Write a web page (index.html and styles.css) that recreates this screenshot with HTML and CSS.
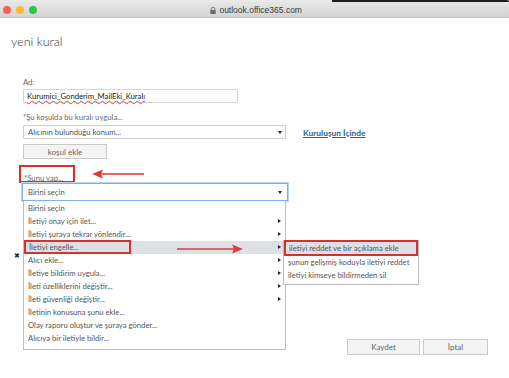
FILE: index.html
```html
<!DOCTYPE html>
<html lang="tr">
<head>
  <meta charset="UTF-8">
  <meta name="viewport" content="width=device-width, initial-scale=1">
  <title>yeni kural</title>
  <link rel="stylesheet" href="styles.css">
</head>
<body>

  <div class="topedge">
    <div class="topedge-left"></div>
    <div class="topedge-right"></div>
  </div>

  <div class="titlebar">
    <div class="lights">
      <span class="light red"></span>
      <span class="light yellow"></span>
      <span class="light green"></span>
    </div>
    <div class="address">
      <svg class="lock" width="6" height="7" viewBox="0 0 6 7">
        <path d="M1.2 3V2a1.8 1.8 0 0 1 3.6 0v1" fill="none" stroke="#6b6b6b" stroke-width="0.9"/>
        <rect x="0.3" y="3" width="5.4" height="4" rx="0.6" fill="#6b6b6b"/>
      </svg>
      outlook.office365.com
    </div>
  </div>

  <div class="page">
    <h1>yeni kural</h1>

    <div class="form">
      <label class="field-label name-label">Ad:</label>
      <div class="textbox"><span class="misspelled">Kurumici_Gonderim_MailEki_Kuralı</span></div>

      <label class="field-label cond-label">*Şu koşulda bu kuralı uygula...</label>
      <div class="cond-row">
        <div class="select">
          <span>Alıcının bulunduğu konum...</span>
          <span class="caret"></span>
        </div>
        <a class="link" href="#">Kuruluşun İçinde</a>
      </div>
      <button class="btn add-btn">koşul ekle</button>

      <div class="action-head">
        <span class="field-label action-label mark">*Şunu yap...</span>
        <svg class="arrow arrow-left" width="52" height="10" viewBox="0 0 52 10">
          <line x1="8" y1="5" x2="52" y2="5" stroke="#e03a35" stroke-width="1.6"/>
          <path d="M0 5 L11 0.5 L9 5 L11 9.5 Z" fill="#e03a35"/>
        </svg>
      </div>

      <div class="action-wrap">
        <div class="select focused">
          <span>Birini seçin</span>
          <span class="caret"></span>
        </div>

        <ul class="menu">
          <li>Birini seçin</li>
          <li class="sub">İletiyi onay için ilet...</li>
          <li class="sub">İletiyi şuraya tekrar yönlendir...</li>
          <li class="sub active"><span class="mark item-mark">İletiyi engelle...</span></li>
          <li class="sub">Alıcı ekle...</li>
          <li class="sub">İletiye bildirim uygula...</li>
          <li class="sub">İleti özelliklerini değiştir...</li>
          <li class="sub">İleti güvenliği değiştir...</li>
          <li>İletinin konusuna şunu ekle...</li>
          <li>Olay raporu oluştur ve şuraya gönder...</li>
          <li>Alıcıya bir iletiyle bildir...</li>
        </ul>

        <svg class="arrow arrow-right" width="66" height="10" viewBox="0 0 66 10">
          <line x1="0" y1="5" x2="57" y2="5" stroke="#e03a35" stroke-width="1.6"/>
          <path d="M66 5 L55 0.5 L57 5 L55 9.5 Z" fill="#e03a35"/>
        </svg>

        <ul class="submenu">
          <li class="active mark">iletiyi reddet ve bir açıklama ekle</li>
          <li>şunun gelişmiş koduyla iletiyi reddet</li>
          <li>iletiyi kimseye bildirmeden sil</li>
        </ul>

        <div class="remove-row"><span class="remove">✖</span></div>
      </div>
    </div>

    <div class="footer">
      <button class="btn save-btn">Kaydet</button>
      <button class="btn cancel-btn">İptal</button>
    </div>
  </div>

</body>
</html>
```

FILE: styles.css
```css
* {
  box-sizing: border-box;
}
body {
  margin: 0;
  background: #fff;
  color: #444;
  font-family: Lato, 'Open Sans', sans-serif;
  font-size: 7.7px;
}
.topedge {
  display: flex;
  height: 2px;
}
.topedge-left {
  flex: 0 0 332px;
  background: #e9e9e9;
}
.topedge-right {
  flex: 1;
  background: #1d1d1d;
  border-top-right-radius: 2px;
}
.titlebar {
  height: 16px;
  background: linear-gradient(#e6e6e6, #d3d3d3);
  border-bottom: 1px solid #c4c4c4;
  display: flex;
  align-items: center;
}
.lights {
  display: flex;
  gap: 5px;
  padding-left: 3px;
  padding-top: 1px;
}
.light {
  width: 8px;
  height: 8px;
  border-radius: 50%;
}
.light.red { background: #fd5f57; }
.light.yellow { background: #febc2e; }
.light.green { background: #28c840; }
.address {
  flex: 1;
  text-align: center;
  font-family: 'Liberation Sans', Arial, sans-serif;
  font-size: 8.5px;
  color: #3b3b3b;
  padding-right: 34px;
  padding-top: 1px;
}
.lock {
  vertical-align: -1px;
  margin-right: 1px;
}
.page {
  padding: 0 21px 0 0;
}
h1 {
  margin: 16px 0 0 11px;
  font-weight: 300;
  font-size: 12.5px;
  line-height: 16px;
  color: #333;
}
.form {
  padding-left: 23px;
}
.field-label {
  display: block;
  color: #6a6a6a;
  line-height: 10px;
}
.name-label {
  margin-top: 27px;
}
.textbox {
  margin-top: 2px;
  width: 215px;
  height: 14px;
  border: 1px solid #d6d6d6;
  padding: 0 3px;
  line-height: 12px;
  color: #222;
}
.misspelled {
  text-decoration: underline wavy #e0473f;
  text-decoration-thickness: 0.5px;
  text-underline-offset: 1px;
}
.cond-label {
  margin-top: 9px;
}
.cond-row {
  display: flex;
  align-items: center;
  gap: 17px;
  margin-top: 3px;
}
.select {
  width: 263px;
  height: 14px;
  border: 1px solid #cfcfcf;
  display: flex;
  align-items: center;
  justify-content: space-between;
  padding: 0 3px 0 4px;
  color: #555;
  background: #fff;
}
.caret {
  width: 0;
  height: 0;
  border-left: 2.5px solid transparent;
  border-right: 2.5px solid transparent;
  border-top: 3px solid #222;
}
.link {
  color: #2d5f8f;
  font-size: 8.4px;
  font-weight: 700;
  text-decoration: underline;
  margin-top: 1px;
}
.btn {
  font-family: Lato, 'Open Sans', sans-serif;
  font-size: 8px;
  color: #666;
  background: #f4f4f4;
  border: 1px solid #c9c9c9;
  padding: 0;
  height: 15px;
}
.add-btn {
  display: block;
  width: 84px;
  margin-top: 5px;
}
.mark {
  border: 2px solid #d9302c;
}
.action-head {
  display: flex;
  align-items: flex-end;
  margin-top: 6px;
  margin-left: -4px;
}
.action-label {
  display: inline-block;
  width: 56px;
  height: 18px;
  padding: 6px 0 0 3px;
}
.arrow-left {
  margin: 0 0 4px 17px;
}
.action-wrap {
  position: relative;
}
.select.focused {
  width: 266px;
  height: 18px;
  margin-left: -1px;
  border: 1px solid #7fb0ea;
  box-shadow: 0 0 0 1px #b9d5f5;
  padding: 0 5px 0 5px;
}
.menu {
  position: absolute;
  left: 0;
  top: 18px;
  width: 263px;
  margin: 0;
  padding: 1px 0 4px;
  list-style: none;
  background: #fff;
  border: 1px solid #bdbdbd;
  border-top: none;
  z-index: 2;
}
.menu li {
  height: 13px;
  line-height: 13px;
  padding-left: 4px;
  color: #555;
  position: relative;
}
.menu li.sub::after {
  content: '';
  position: absolute;
  right: 4px;
  top: 4px;
  border-top: 2.5px solid transparent;
  border-bottom: 2.5px solid transparent;
  border-left: 3px solid #222;
}
.menu li.active {
  background: #dde1e6;
  padding-left: 0;
}
.item-mark {
  display: inline-block;
  width: 107px;
  height: 14px;
  line-height: 10px;
  padding-left: 3px;
  margin-top: -1px;
}
.arrow-right {
  position: absolute;
  left: 154px;
  top: 61px;
  z-index: 3;
}
.submenu {
  position: absolute;
  left: 260px;
  top: 57px;
  width: 136px;
  margin: 0;
  padding: 0 2px 2px;
  list-style: none;
  background: #fff;
  border: 1px solid #bdbdbd;
  border-top: none;
  z-index: 3;
}
.submenu li {
  height: 13px;
  line-height: 12px;
  padding-left: 2px;
  color: #555;
  white-space: nowrap;
}
.submenu li.active {
  background: #dde1e6;
  height: 16px;
  margin: 0 -2px;
  padding-left: 3px;
}
.remove-row {
  padding-top: 49px;
  height: 138px;
}
.remove {
  margin-left: -9px;
  font-size: 7px;
  color: #222;
}
.footer {
  display: flex;
  justify-content: flex-end;
  gap: 3px;
}
.save-btn {
  width: 73px;
  height: 16px;
}
.cancel-btn {
  width: 65px;
  height: 16px;
}
```
